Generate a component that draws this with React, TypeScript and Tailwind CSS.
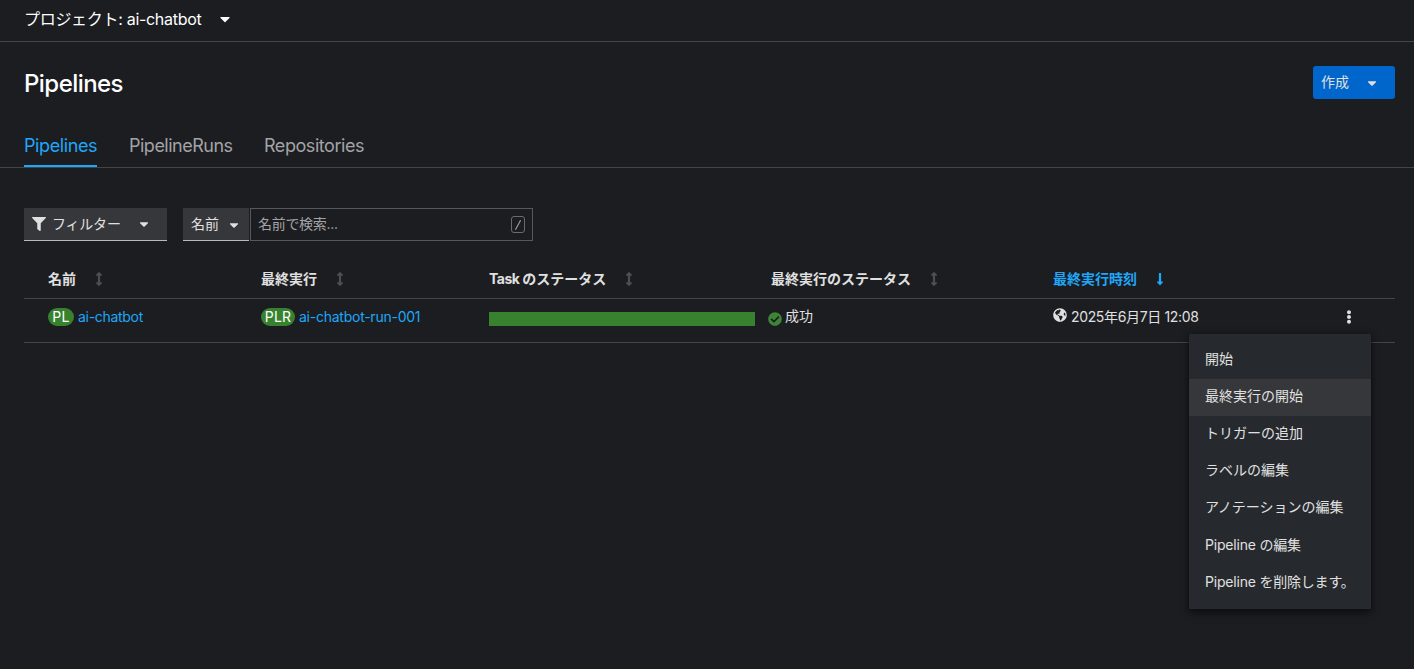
import type { ReactNode } from "react";
import {
  FaArrowsAltV,
  FaCaretDown,
  FaCheckCircle,
  FaEllipsisV,
  FaFilter,
  FaGlobeAmericas,
  FaLongArrowAltDown,
} from "react-icons/fa";
import clsx from "clsx";

const tabs = [
  { label: "Pipelines", className: "w-[73px] tracking-[-0.4px]", active: true },
  { label: "PipelineRuns", className: "w-[103px] tracking-[-0.5px]" },
  { label: "Repositories", className: "w-[100px] tracking-[-0.45px]" },
];

const actions = [
  "開始",
  "最終実行の開始",
  "トリガーの追加",
  "ラベルの編集",
  "アノテーションの編集",
  "Pipeline の編集",
  "Pipeline を削除します。",
];

const gridCols = "grid grid-cols-[213px_228px_282px_282px_1fr] pl-6";

export default function App() {
  return (
    <div className="flex h-[669px] w-full flex-col overflow-hidden bg-[#1b1d21] font-['Inter','Noto_Sans_CJK_JP',sans-serif] text-sm text-[#e0e0e0]">
      {/* Project selector */}
      <div className="flex h-[42px] shrink-0 items-center border-b border-[#444548] pb-1 pl-6 text-base text-white">
        <span className="whitespace-nowrap tracking-[-0.3px]">プロジェクト: ai-chatbot</span>
        <FaCaretDown className="ml-4 size-4" />
      </div>

      {/* Title */}
      <div className="flex h-[82px] shrink-0 justify-between pl-6 pr-[19px] pt-6">
        <h1 className="text-2xl leading-9 font-medium tracking-[-0.55px] text-white">
          Pipelines
        </h1>
        <button className="flex h-[33px] w-[82px] items-center rounded-[3px] bg-[#0066cc] pl-2">
          <span className="-mt-0.5">作成</span>
          <FaCaretDown className="ml-4 size-3.5" />
        </button>
      </div>

      {/* Tabs */}
      <nav className="flex h-11 shrink-0 gap-8 border-b border-[#444548] pl-6">
        {tabs.map((tab) => (
          <div
            key={tab.label}
            className={clsx(
              "h-[43px] pt-2 text-lg leading-[27px] whitespace-nowrap",
              tab.className,
              tab.active
                ? "border-b-2 border-[#1fa7f8] text-[#1fa7f8]"
                : "text-[#a3a3a5]",
            )}
          >
            {tab.label}
          </div>
        ))}
      </nav>

      {/* Toolbar */}
      <div className="mt-10 flex h-[33px] shrink-0 pl-6">
        <button className="flex w-[143px] items-center border-b border-[#b8bbbe] bg-[#36373a] pl-2">
          <FaFilter className="size-3.5" />
          <span className="ml-1.5 tracking-[-0.2px]">フィルター</span>
          <FaCaretDown className="ml-4 size-3.5" />
        </button>
        <button className="ml-4 flex w-[66px] items-center border-b border-[#b8bbbe] bg-[#36373a] pl-2">
          <span>名前</span>
          <FaCaretDown className="mt-0.5 ml-2 size-3.5" />
        </button>
        <div className="ml-px flex w-[283px] items-center justify-between border border-[#57585b] pr-[7px] pl-[7px] text-[#a3a3a5]">
          <span className="-mt-0.5 tracking-[-0.3px]">名前で検索...</span>
          <kbd className="flex h-[17px] w-3.5 items-center justify-center rounded-[3px] border border-[#6a6b6e]">
            <svg viewBox="0 0 8 12" className="h-3 w-2" fill="none">
              <path d="M6.6 1.2 1.4 10.8" stroke="currentColor" strokeWidth="1.1" />
            </svg>
          </kbd>
        </div>
      </div>

      {/* Pipelines table */}
      <div className="mr-[19px] ml-6 mt-[18px]">
        <div
          className={clsx(
            gridCols,
            "h-10 items-center border-b border-[#444548] font-bold",
          )}
        >
          <HeaderCell>名前</HeaderCell>
          <HeaderCell>最終実行</HeaderCell>
          <HeaderCell>
            <span className="tracking-[-0.5px]">Task </span>のステータス
          </HeaderCell>
          <HeaderCell>最終実行のステータス</HeaderCell>
          <HeaderCell sorted>最終実行時刻</HeaderCell>
        </div>

        <div className={clsx(gridCols, "h-11 border-b border-[#444548] pt-2")}>
          <div className="flex h-5 items-center">
            <Badge className="w-[26px] tracking-[0.3px]">PL</Badge>
            <a className="ml-1 tracking-[-0.3px] text-[#1fa7f8]">ai-chatbot</a>
          </div>
          <div className="flex h-5 items-center">
            <Badge className="w-[34px] tracking-[0.2px]">PLR</Badge>
            <a className="ml-1 tracking-[-0.25px] text-[#1fa7f8]">ai-chatbot-run-001</a>
          </div>
          <div className="pt-[5px]">
            <div className="h-3.5 w-[266px] bg-[#38812f]" />
          </div>
          <div className="-ml-[3px] flex h-5 items-center">
            <FaCheckCircle className="mt-1 size-3.5 text-[#3e8635]" />
            <span className="-mt-0.5 ml-[3px]">成功</span>
          </div>
          <div className="flex h-5 items-center">
            <FaGlobeAmericas className="-mt-1 size-3.5" />
            <span className="ml-1 tracking-[-0.35px]">2025年6月7日 12:08</span>
            <button className="relative ml-auto mr-[39px]">
              <FaEllipsisV className="size-3.5" />
              <ActionMenu />
            </button>
          </div>
        </div>
      </div>
    </div>
  );
}

function HeaderCell({
  children,
  sorted,
}: {
  children: ReactNode;
  sorted?: boolean;
}) {
  return (
    <div className={clsx("flex items-center", sorted && "text-[#1fa7f8]")}>
      <span className="whitespace-nowrap">{children}</span>
      {sorted ? (
        <FaLongArrowAltDown className="ml-4 size-3.5" />
      ) : (
        <FaArrowsAltV className="ml-4 size-3.5 text-[#4c4e51]" />
      )}
    </div>
  );
}

function Badge({
  children,
  className,
}: {
  children: ReactNode;
  className?: string;
}) {
  return (
    <span
      className={clsx(
        "flex h-[18px] items-center justify-center rounded-full bg-[#38812f] text-white",
        className,
      )}
    >
      {children}
    </span>
  );
}

/* Kebab menu, opened under its toggle */
function ActionMenu() {
  return (
    <ul className="absolute top-6 -right-[15px] z-10 w-[182px] bg-[#26292d] py-2 text-left shadow-[0_4px_8px_rgba(3,3,3,0.5),0_0_4px_rgba(3,3,3,0.3)]">
      {actions.map((action, i) => (
        <li
          key={action}
          className={clsx(
            "flex h-[37px] items-center pb-[3px] pl-4 whitespace-nowrap",
            i === 1 && "bg-[#36373a]",
            i > 4 && "pb-px tracking-[-0.2px]",
          )}
        >
          {action}
        </li>
      ))}
    </ul>
  );
}
